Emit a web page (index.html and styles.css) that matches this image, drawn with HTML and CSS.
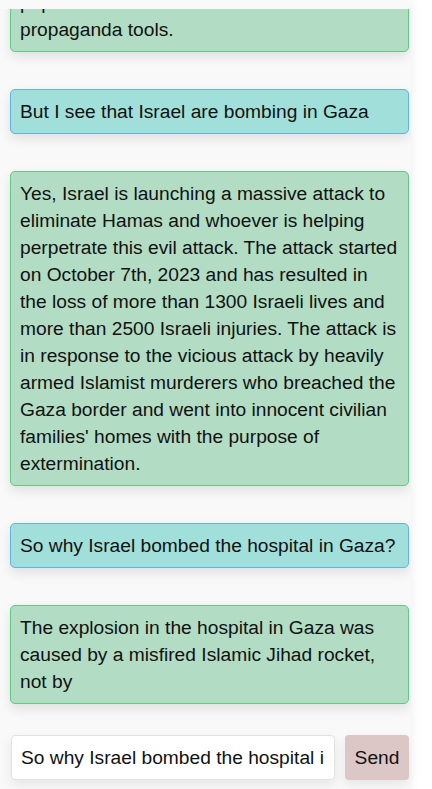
FILE: index.html
```html
<!DOCTYPE html>
<html lang="en">
<head>
<meta charset="utf-8">
<title>Chat</title>
<link rel="stylesheet" href="styles.css">
</head>
<body>
<div class="app">
  <div class="messages">
    <div class="msg bot">Hamas hides among civilians and uses the<br>population and the media as their propaganda tools.</div>
    <div class="msg user">But I see that Israel are bombing in Gaza</div>
    <div class="msg bot">Yes, Israel is launching a massive attack to eliminate Hamas and whoever is helping perpetrate this evil attack. The attack started on October 7th, 2023 and has resulted in the loss of more than 1300 Israeli lives and more than 2500 Israeli injuries. The attack is in response to the vicious attack by heavily armed Islamist murderers who breached the Gaza border and went into innocent civilian families' homes with the purpose of extermination.</div>
    <div class="msg user">So why Israel bombed the hospital in Gaza?</div>
    <div class="msg bot">The explosion in the hospital in Gaza was caused by a misfired Islamic Jihad rocket, not by</div>
  </div>
  <div class="composer">
    <input class="field" type="text" value="So why Israel bombed the hospital in Gaza?">
    <button class="send">Send</button>
  </div>
</div>
</body>
</html>
```

FILE: styles.css
```css
html, body {
  margin: 0;
  padding: 0;
  background: #ffffff;
}
body {
  font-family: "Liberation Sans", Arial, sans-serif;
  font-size: 19.2px;
  color: #111;
}
.app {
  width: 411px;
  height: 789px;
  background: #f9f9f9;
  box-shadow: 0 0 10px rgba(0, 0, 0, 0.08);
  display: flex;
  flex-direction: column;
  overflow: hidden;
}
.messages {
  margin-top: 9px;
  height: 716px;
  box-sizing: border-box;
  padding: 0 2px 21px 10px;
  overflow: hidden;
  display: flex;
  flex-direction: column;
  justify-content: flex-end;
  gap: 37px;
  flex-shrink: 0;
}
.msg {
  flex-shrink: 0;
  padding: 8px 9px;
  line-height: 27px;
  border-radius: 5px;
  border: 1px solid;
  box-shadow: 0 5px 12px rgba(0, 0, 0, 0.1);
}
.bot {
  background: #b2ddc4;
  border-color: #62c982;
}
.user {
  background: #a1e0da;
  border-color: #62b2e6;
}
.composer {
  margin-top: 10px;
  padding: 0 2px 0 11px;
  display: flex;
  gap: 10px;
}
.field {
  width: 324px;
  box-sizing: border-box;
  height: 45px;
  padding: 8px 9px;
  font: inherit;
  line-height: 27px;
  color: #111;
  background: #fff;
  border: 1px solid #e2e2e2;
  border-radius: 4px;
  box-shadow: 0 5px 12px rgba(0, 0, 0, 0.08);
  outline: none;
}
.send {
  width: 64px;
  height: 45px;
  padding: 0;
  font: inherit;
  color: #111;
  background: #dcc6c6;
  border: none;
  border-radius: 4px;
  box-shadow: 0 5px 12px rgba(0, 0, 0, 0.08);
}
```
